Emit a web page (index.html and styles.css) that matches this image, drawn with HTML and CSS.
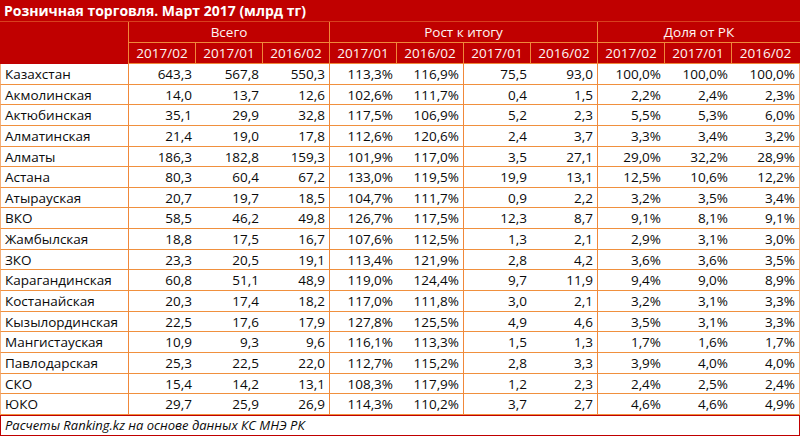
FILE: index.html
```html
<!DOCTYPE html>
<html lang="ru">
<head>
<meta charset="utf-8">
<title>Розничная торговля</title>
<link rel="stylesheet" href="styles.css">
</head>
<body>
<div class="sheet">
  <div class="title">Розничная торговля. Март 2017 (млрд тг)</div>

  <div class="h corner"></div>
  <div class="h grp g1">Всего</div>
  <div class="h grp g2">Рост к итогу</div>
  <div class="h grp g3">Доля от РК</div>
  <div class="h sub">2017/02</div><div class="h sub">2017/01</div><div class="h sub end">2016/02</div>
  <div class="h sub">2017/01</div><div class="h sub">2016/02</div><div class="h sub">2017/01</div><div class="h sub end">2016/02</div>
  <div class="h sub">2017/02</div><div class="h sub">2017/01</div><div class="h sub last">2016/02</div>

  <div class="c name">Казахстан</div><div class="c">643,3</div><div class="c">567,8</div><div class="c e">550,3</div><div class="c">113,3%</div><div class="c e">116,9%</div><div class="c">75,5</div><div class="c e">93,0</div><div class="c">100,0%</div><div class="c">100,0%</div><div class="c l">100,0%</div>
  <div class="c name">Акмолинская</div><div class="c">14,0</div><div class="c">13,7</div><div class="c e">12,6</div><div class="c">102,6%</div><div class="c e">111,7%</div><div class="c">0,4</div><div class="c e">1,5</div><div class="c">2,2%</div><div class="c">2,4%</div><div class="c l">2,3%</div>
  <div class="c name">Актюбинская</div><div class="c">35,1</div><div class="c">29,9</div><div class="c e">32,8</div><div class="c">117,5%</div><div class="c e">106,9%</div><div class="c">5,2</div><div class="c e">2,3</div><div class="c">5,5%</div><div class="c">5,3%</div><div class="c l">6,0%</div>
  <div class="c name">Алматинская</div><div class="c">21,4</div><div class="c">19,0</div><div class="c e">17,8</div><div class="c">112,6%</div><div class="c e">120,6%</div><div class="c">2,4</div><div class="c e">3,7</div><div class="c">3,3%</div><div class="c">3,4%</div><div class="c l">3,2%</div>
  <div class="c name">Алматы</div><div class="c">186,3</div><div class="c">182,8</div><div class="c e">159,3</div><div class="c">101,9%</div><div class="c e">117,0%</div><div class="c">3,5</div><div class="c e">27,1</div><div class="c">29,0%</div><div class="c">32,2%</div><div class="c l">28,9%</div>
  <div class="c name">Астана</div><div class="c">80,3</div><div class="c">60,4</div><div class="c e">67,2</div><div class="c">133,0%</div><div class="c e">119,5%</div><div class="c">19,9</div><div class="c e">13,1</div><div class="c">12,5%</div><div class="c">10,6%</div><div class="c l">12,2%</div>
  <div class="c name">Атырауская</div><div class="c">20,7</div><div class="c">19,7</div><div class="c e">18,5</div><div class="c">104,7%</div><div class="c e">111,7%</div><div class="c">0,9</div><div class="c e">2,2</div><div class="c">3,2%</div><div class="c">3,5%</div><div class="c l">3,4%</div>
  <div class="c name">ВКО</div><div class="c">58,5</div><div class="c">46,2</div><div class="c e">49,8</div><div class="c">126,7%</div><div class="c e">117,5%</div><div class="c">12,3</div><div class="c e">8,7</div><div class="c">9,1%</div><div class="c">8,1%</div><div class="c l">9,1%</div>
  <div class="c name">Жамбылская</div><div class="c">18,8</div><div class="c">17,5</div><div class="c e">16,7</div><div class="c">107,6%</div><div class="c e">112,5%</div><div class="c">1,3</div><div class="c e">2,1</div><div class="c">2,9%</div><div class="c">3,1%</div><div class="c l">3,0%</div>
  <div class="c name">ЗКО</div><div class="c">23,3</div><div class="c">20,5</div><div class="c e">19,1</div><div class="c">113,4%</div><div class="c e">121,9%</div><div class="c">2,8</div><div class="c e">4,2</div><div class="c">3,6%</div><div class="c">3,6%</div><div class="c l">3,5%</div>
  <div class="c name">Карагандинская</div><div class="c">60,8</div><div class="c">51,1</div><div class="c e">48,9</div><div class="c">119,0%</div><div class="c e">124,4%</div><div class="c">9,7</div><div class="c e">11,9</div><div class="c">9,4%</div><div class="c">9,0%</div><div class="c l">8,9%</div>
  <div class="c name">Костанайская</div><div class="c">20,3</div><div class="c">17,4</div><div class="c e">18,2</div><div class="c">117,0%</div><div class="c e">111,8%</div><div class="c">3,0</div><div class="c e">2,1</div><div class="c">3,2%</div><div class="c">3,1%</div><div class="c l">3,3%</div>
  <div class="c name">Кызылординская</div><div class="c">22,5</div><div class="c">17,6</div><div class="c e">17,9</div><div class="c">127,8%</div><div class="c e">125,5%</div><div class="c">4,9</div><div class="c e">4,6</div><div class="c">3,5%</div><div class="c">3,1%</div><div class="c l">3,3%</div>
  <div class="c name">Мангистауская</div><div class="c">10,9</div><div class="c">9,3</div><div class="c e">9,6</div><div class="c">116,1%</div><div class="c e">113,3%</div><div class="c">1,5</div><div class="c e">1,3</div><div class="c">1,7%</div><div class="c">1,6%</div><div class="c l">1,7%</div>
  <div class="c name">Павлодарская</div><div class="c">25,3</div><div class="c">22,5</div><div class="c e">22,0</div><div class="c">112,7%</div><div class="c e">115,2%</div><div class="c">2,8</div><div class="c e">3,3</div><div class="c">3,9%</div><div class="c">4,0%</div><div class="c l">4,0%</div>
  <div class="c name">СКО</div><div class="c">15,4</div><div class="c">14,2</div><div class="c e">13,1</div><div class="c">108,3%</div><div class="c e">117,9%</div><div class="c">1,2</div><div class="c e">2,3</div><div class="c">2,4%</div><div class="c">2,5%</div><div class="c l">2,4%</div>
  <div class="c name">ЮКО</div><div class="c">29,7</div><div class="c">25,9</div><div class="c e">26,9</div><div class="c">114,3%</div><div class="c e">110,2%</div><div class="c">3,7</div><div class="c e">2,7</div><div class="c">4,6%</div><div class="c">4,6%</div><div class="c l">4,9%</div>

  <div class="foot">Расчеты Ranking.kz на основе данных КС МНЭ РК</div>
</div>
</body>
</html>
```

FILE: styles.css
```css
html, body {
  margin: 0;
  padding: 0;
  background: #ffffff;
}

.sheet {
  width: 800px;
  height: 436px;
  display: grid;
  grid-template-columns: 129px repeat(10, 67px) 1px;
  grid-template-rows: 22px 21px 21px repeat(17, 20.647px) 21px;
  font-family: "Open Sans", "Liberation Sans", sans-serif;
  font-size: 13.5px;
  color: #0a0a0a;
  box-sizing: border-box;
}

.title {
  grid-column: 1 / -1;
  background: #c00000;
  color: #ffffff;
  font-weight: bold;
  font-size: 14px;
  padding-left: 4px;
  line-height: 21px;
  border-bottom: 1px solid #d8401e;
  white-space: nowrap;
}

.h {
  background: #c00000;
  color: #fff6f4;
  box-sizing: border-box;
  text-align: center;
  line-height: 20px;
  font-size: 13.5px;
}

.corner {
  grid-row: 2 / 4;
  grid-column: 1;
  border-right: 1px solid #f0883a;
}

.grp {
  grid-row: 2;
  border-bottom: 1px solid #f0883a;
  border-right: 1px solid #f0883a;
}
.g1 { grid-column: 2 / 5; }
.g2 { grid-column: 5 / 9; }
.g3 { grid-column: 9 / 13; border-right: none; }

.sub {
  grid-row: 3;
  border-right: 1px solid #f0883a;
  border-bottom: 1px solid #f0883a;
}
.sub.last {
  grid-column: 11 / 13;
  border-right: none;
  padding-right: 1px;
}

.c {
  box-sizing: border-box;
  border-bottom: 1px solid #f0903e;
  text-align: right;
  padding-right: 4px;
  line-height: 20px;
  white-space: nowrap;
  overflow: hidden;
}

.c.name {
  text-align: left;
  padding-left: 4px;
  padding-right: 0;
  border-right: 1px solid #f0883a;
  border-left: 1px solid #f3b07a;
}

.c.e {
  border-right: 1px solid #f0883a;
}

.c.l {
  grid-column: 11 / 13;
  padding-right: 4px;
  border-right: 1px solid #f3b07a;
}

.foot {
  grid-column: 1 / -1;
  box-sizing: border-box;
  border: 1px solid #c00000;
  font-style: italic;
  font-size: 13px;
  padding-left: 4px;
  line-height: 19px;
  white-space: nowrap;
}
```
